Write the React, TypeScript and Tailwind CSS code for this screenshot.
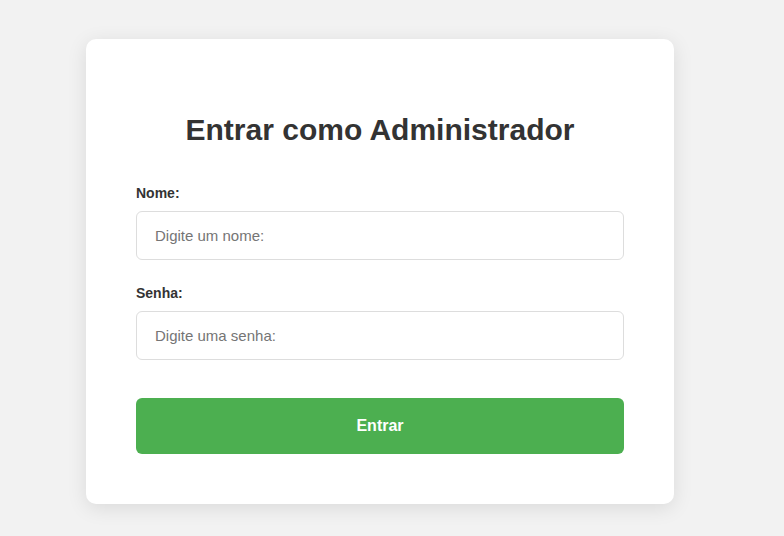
export default function App() {
  return (
    <main
      className="min-h-screen w-full bg-[#f2f2f2] pt-[39px] pl-[86px]"
      style={{ fontFamily: '"Liberation Sans", Arial, sans-serif' }}
    >
      <div className="w-[588px] bg-white rounded-[10px] shadow-[0_4px_20px_rgba(0,0,0,0.1)] px-[50px] pt-[74px] pb-[50px]">
        <h2 className="text-[30px] leading-[34px] font-bold text-[#333] text-center">
          Entrar como Administrador
        </h2>

        <form className="mt-[36px] flex flex-col" onSubmit={(e) => e.preventDefault()}>
          <label className="text-[14px] leading-[20px] font-bold text-[#333]">Nome:</label>
          <input
            type="text"
            placeholder="Digite um nome:"
            className="mt-[8px] h-[49px] w-full rounded-[6px] border border-[#ddd] px-[18px] text-[15px] text-[#333] placeholder:text-[#757575] outline-none"
          />

          <label className="mt-[23px] text-[14px] leading-[20px] font-bold text-[#333]">Senha:</label>
          <input
            type="password"
            placeholder="Digite uma senha:"
            className="mt-[8px] h-[49px] w-full rounded-[6px] border border-[#ddd] px-[18px] text-[15px] text-[#333] placeholder:text-[#757575] outline-none"
          />

          <button
            type="submit"
            className="mt-[38px] h-[56px] w-full rounded-[6px] bg-[#4caf50] text-white text-[16px] font-bold"
          >
            Entrar
          </button>
        </form>
      </div>
    </main>
  )
}
